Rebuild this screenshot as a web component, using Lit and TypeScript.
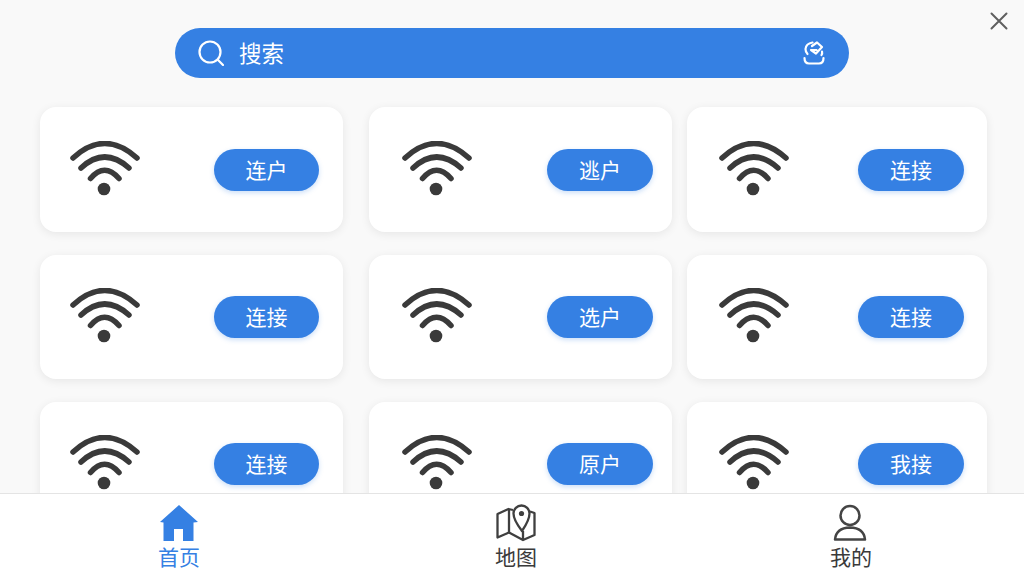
import { LitElement, html, css, svg } from 'lit';
import { customElement } from 'lit/decorators.js';

const cjk = css`'Noto Sans CJK SC', 'Noto Sans', sans-serif`;

// labels as they read in the reference, row by row
const LABELS = ['连户', '逃户', '连接', '连接', '选户', '连接', '连接', '原户', '我接'];

const wifiIcon = svg`
  <svg class="wifi" width="70" height="55" viewBox="0 0 70 55" fill="none" stroke="#3a3a3a" stroke-width="5.5" stroke-linecap="round">
    <path d="M3 17Q34.5 -12 67 17" />
    <path d="M11 27Q34.5 5 59 27" />
    <path d="M20.5 37.5Q34.5 21 49 37.5" />
    <circle cx="34" cy="48" r="6.3" fill="#3a3a3a" stroke="none" />
  </svg>
`;

@customElement('app-root')
export class AppRoot extends LitElement {
  static styles = css`
    :host {
      display: flex;
      flex-direction: column;
      position: relative;
      height: 576px;
      overflow: hidden;
      background: #f9f9f9;
      font-family: ${cjk};
    }
    .close {
      position: absolute;
      top: 12px;
      right: 16px;
      display: block;
    }
    main {
      flex: 1;
      min-height: 0;
      overflow: hidden;
      padding: 28px 0 0 40px;
    }
    .search {
      display: flex;
      align-items: center;
      box-sizing: border-box;
      width: 674px;
      height: 50px;
      margin-left: 135px;
      padding: 0 24px 0 23px;
      border-radius: 25px;
      background: #3580e3;
      color: #fff;
      font-size: 22.5px;
    }
    .search span {
      flex: 1;
      margin: 0 0 2px 15px;
    }
    .grid {
      display: grid;
      grid-template-columns: 314px 303px 300px;
      grid-template-rows: 125px 124px 124px;
      column-gap: 15px;
      row-gap: 23px;
      margin-top: 29px;
    }
    .card {
      display: flex;
      align-items: center;
      justify-content: space-between;
      padding: 0 23px 0 32px;
      border-radius: 16px;
      background: #fff;
      box-shadow: 0 2px 10px rgba(0, 0, 0, 0.08);
    }
    .card:nth-child(3n + 1) {
      margin-right: 11px;
      padding: 0 24px 0 30px;
    }
    .card:nth-child(3n + 2) {
      padding: 0 19px 0 33px;
    }
    .wifi {
      display: block;
      margin-top: -3px;
    }
    .connect {
      box-sizing: border-box;
      width: 106px;
      height: 42px;
      padding: 0 0 2px;
      border: none;
      border-radius: 21px;
      background: #3580e3;
      color: #fff;
      font: 21px ${cjk};
      box-shadow: 0 2px 5px rgba(53, 128, 227, 0.25);
    }
    .card:nth-child(3n + 1) .connect {
      width: 105px;
    }
    nav {
      flex: none;
      display: grid;
      grid-template-columns: 358px 316px 350px;
      height: 83px;
      box-sizing: border-box;
      border-top: 1px solid #e4e4e4;
      background: #fff;
    }
    .tab {
      display: flex;
      flex-direction: column;
      align-items: center;
      padding-top: 10px;
      color: #3a3a3a;
      font-size: 21px;
      line-height: 28px;
    }
    .tab:last-child {
      padding-left: 4px;
    }
    .tab svg {
      display: block;
      flex: none;
    }
    .tab.active {
      color: #3580e3;
    }
  `;

  render() {
    return html`
      <svg class="close" width="18" height="18" viewBox="0 0 18 18" fill="none" stroke="#5f5f5f" stroke-width="2" stroke-linecap="round">
        <path d="M1.5 1.5L16.5 16.5M16.5 1.5L1.5 16.5" />
      </svg>
      <main>
        <div class="search">
          <svg width="26" height="26" viewBox="0 0 26 26" fill="none" stroke="#fff" stroke-width="2.2" stroke-linecap="round">
            <circle cx="12" cy="12" r="10.5" />
            <path d="M19.8 19.8L25 25" />
          </svg>
          <span>搜索</span>
          <svg width="22" height="24" viewBox="0 0 22 24" fill="none" stroke="#fff" stroke-width="2.2" stroke-linecap="round" stroke-linejoin="round">
            <path d="M9.5 1.5Q3 2.5 2.5 8Q2.5 11 4.5 13" />
            <path d="M9 5L14 1.5L19 6L13 12.5L8 9H13.5" />
            <path d="M19 10.5Q19.5 12.5 18.5 14" />
            <path d="M1.5 17Q1.5 22.5 6 22.5H16Q20.5 22.5 20.5 17" />
          </svg>
        </div>
        <div class="grid">
          ${LABELS.map(
            (label) => html`
              <div class="card">
                ${wifiIcon}
                <button class="connect">${label}</button>
              </div>
            `
          )}
        </div>
      </main>
      <nav>
        <div class="tab active">
          <svg width="38" height="38" viewBox="0 0 38 38" fill="#3580e3">
            <path d="M19 1L38 18L33.500 18.500V37H23V25H14V37H3.500V18.500L0 18Z" />
          </svg>
          首页
        </div>
        <div class="tab">
          <svg width="40" height="38" viewBox="0 0 40 38" fill="none" stroke="#3f3f3f" stroke-width="2.3" stroke-linejoin="round">
            <path d="M17 6L12.5 5L1.5 10V33.5L13 28.5L27 36L38.5 31V9L34 7.5" />
            <path d="M13 5.5V28.5M27 27V36" />
            <path d="M26 27Q17.5 16 17.5 9.5A8 8 0 0 1 33.5 9.5Q33.5 16 26 27Z" fill="#fff" />
            <circle cx="25.5" cy="9.5" r="2.6" fill="#3f3f3f" stroke="none" />
          </svg>
          地图
        </div>
        <div class="tab">
          <svg width="36" height="38" viewBox="0 0 36 38" fill="none" stroke="#444" stroke-width="2.5" stroke-linejoin="round">
            <circle cx="17" cy="11.5" r="9.5" />
            <path d="M2 35.5Q3 24 17 23.5Q31 24 32 35.5Z" />
          </svg>
          我的
        </div>
      </nav>
    `;
  }
}
